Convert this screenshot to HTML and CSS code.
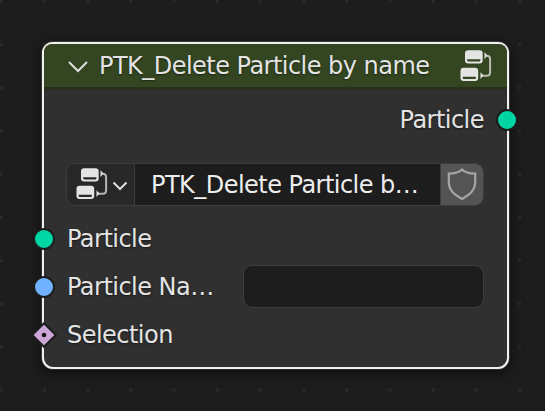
FILE: index.html
```html
<!DOCTYPE html>
<html lang="en">
<head>
<meta charset="utf-8">
<title>Node editor</title>
<link rel="stylesheet" href="styles.css">
</head>
<body>
<svg class="defs" aria-hidden="true">
  <symbol id="nodes" viewBox="0 0 32 32">
    <path fill="currentColor" fill-rule="evenodd" d="M8.200 .3h11.300a3.200 3.200 0 0 1 3.200 3.200v6.800a3.200 3.200 0 0 1-3.200 3.200H8.200A3.200 3.200 0 0 1 5 10.300V3.500A3.200 3.200 0 0 1 8.200 .3zM7.200 9.200v1.100q0 1.200 1.200 1.200h10.800q1.200 0 1.200-1.200V9.200zM3.700 17.800H15a3.200 3.200 0 0 1 3.200 3.200v6.800A3.200 3.200 0 0 1 15 31H3.700a3.200 3.200 0 0 1-3.200-3.200V21a3.200 3.200 0 0 1 3.200-3.200zM2.700 26.700v1.100q0 1.200 1.200 1.200h10.800q1.200 0 1.200-1.200v-1.100z"/>
    <path fill="currentColor" d="M24.500 2.300l3 3.300-3 3.300zM20.500 22.300l3 3.300-3 3.300z"/>
    <path fill="none" stroke="currentColor" stroke-width="2" opacity=".75" d="M26.500 5.800q3.600 0 3.600 3.200v13.500q0 3.200-3.200 3.200H22.500"/>
  </symbol>
</svg>
<main class="canvas">
  <section class="node">
    <header class="header">
      <svg class="collapse" viewBox="0 0 22 14"><path d="M2 2l9 9 9-9"/></svg>
      <h1 class="title">PTK_Delete Particle by name</h1>
      <svg class="group-icon"><use href="#nodes"/></svg>
    </header>
    <div class="body">
      <div class="row output"><span>Particle</span><i class="socket geometry out"></i></div>
      <div class="selector">
        <div class="browse">
          <svg class="group-icon"><use href="#nodes"/></svg>
          <svg class="arrow" viewBox="0 0 16 10"><path d="M1.500 1.500L8 8l6.500-6.500"/></svg>
        </div>
        <div class="name">PTK_Delete Particle b…</div>
        <div class="fake-user"><svg viewBox="0 0 32 34"><path d="M16 2.500q-4 4-13.200 4.200v8c0 9 5.500 12.500 13.200 17.300 7.700-4.800 13.200-8.300 13.200-17.300v-8Q20 6.500 16 2.500z"/></svg></div>
      </div>
      <div class="row"><i class="socket geometry"></i><span>Particle</span></div>
      <div class="row"><i class="socket string"></i><span class="label">Particle Na…</span><div class="field"></div></div>
      <div class="row"><svg class="diamond" viewBox="0 0 28 28"><path d="M14 2.200L25.800 14 14 25.800 2.200 14z"/><circle cx="14" cy="14" r="2.300"/></svg><span>Selection</span></div>
    </div>
  </section>
</main>
</body>
</html>
```
FILE: styles.css
```css
* { box-sizing: border-box; }
body {
  margin: 0;
  background: #1d1d1d;
  color: #e4e4e4;
  font: 24px/28px "DejaVu Sans", sans-serif;
  letter-spacing: -.53px;
  overflow: hidden;
}
.defs { position: absolute; width: 0; height: 0; }
.canvas {
  width: 545px;
  height: 411px;
  padding: 42px 0 0 42px;
  border-bottom: 1px solid #20181c;
  background: conic-gradient(from 0deg at 3px 3px, transparent 75%, #2a2a2a 0) 0 0 / 43.200px 43.200px;
}
.node {
  width: 467px;
  height: 327px;
  border: 2px solid #f0f0f0;
  border-radius: 11px;
  background: #303030;
  box-shadow: 0 3px 12px 2px rgba(0, 0, 0, .5), 0 0 0 .5px #777;
}
.header {
  display: flex;
  align-items: center;
  height: 46px;
  padding: 1px 15px 0 23px;
  border-bottom: 3px solid #27301d;
  border-radius: 8px 8px 0 0;
  background: #344621;
}
.title {
  flex: 1;
  margin: 0 0 0 10px;
  font-size: 24px;
  font-weight: 400;
  white-space: nowrap;
  text-shadow: 0 1px 2px #0008;
}
.collapse { width: 22px; height: 14px; margin-top: 2px; }
.collapse path, .arrow path { fill: none; stroke: #dedede; stroke-width: 2; }
.group-icon { flex: none; width: 32px; height: 32px; color: #e4e4e4; }
.body { padding: 6px 23px 0 22px; }
.row {
  position: relative;
  display: flex;
  align-items: center;
  height: 47.600px;
  padding-left: 1px;
  text-shadow: 0 1px 2px #0008;
}
.output { justify-content: flex-end; }
.socket {
  position: absolute;
  left: -33px;
  width: 22px;
  height: 22px;
  border: 2px solid #1d1d1d;
  border-radius: 50%;
}
.out { left: auto; right: -34px; }
.geometry { background: #00d6a3; }
.string { background: #70b2ff; }
.diamond { position: absolute; left: -36px; width: 28px; height: 28px; }
.diamond path { fill: #cca6d6; stroke: #1d1d1d; stroke-width: 2; }
.diamond circle { fill: #161616; }
.selector {
  display: flex;
  height: 43px;
  margin: 19px 0 10px;
  border: 1px solid #3d3d3d;
  border-radius: 9px;
  overflow: hidden;
}
.browse {
  display: flex;
  align-items: center;
  width: 68px;
  padding-left: 9px;
  gap: 4px;
  border-right: 1px solid #3d3d3d;
  background: #282828;
}
.arrow { width: 16px; height: 10px; margin-top: 3px; }
.name { flex: 1; padding: 7px 0 0 16px; background: #1d1d1d; color: #eee; white-space: nowrap; }
.fake-user { width: 43px; padding: 3px 5px; border-left: 1px solid #3d3d3d; background: #545454; }
.fake-user svg { display: block; width: 32px; height: 34px; }
.fake-user path { fill: none; stroke: #a6a6a6; stroke-width: 2.200; }
.label { width: 176px; }
.field {
  width: 242px;
  height: 43px;
  border: 1px solid #3d3d3d;
  border-radius: 9px;
  background: #1d1d1d;
}
```
